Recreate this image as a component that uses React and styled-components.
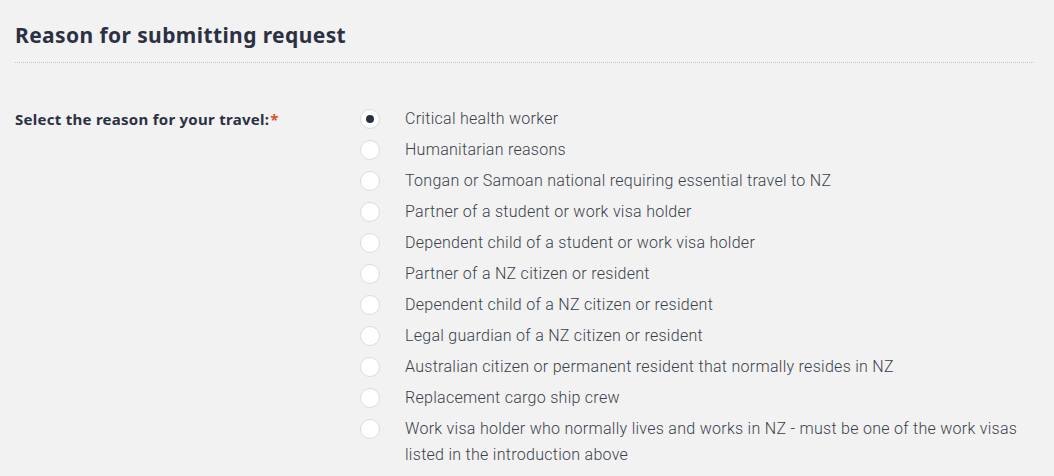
import React from 'react';
import styled, { createGlobalStyle } from 'styled-components';

const GlobalStyle = createGlobalStyle`
  html, body {
    margin: 0;
    background: #f2f2f2;
  }
  body {
    font-family: Roboto, "Noto Sans", sans-serif;
    color: #2b3143;
  }
`;

const Page = styled.section`
  padding: 21px 20px 0 15px;
`;

const Heading = styled.h2`
  margin: 0;
  font-family: "Noto Sans", sans-serif;
  font-size: 21px;
  font-weight: 700;
  line-height: 28px;
  letter-spacing: 0.4px;
  color: #2b3143;
`;

const Divider = styled.hr`
  margin: 13px 0 0;
  border: 0;
  border-top: 1px dotted #c4c4c4;
`;

const Field = styled.div`
  display: grid;
  grid-template-columns: 345px 1fr;
  margin-top: 43px;
`;

const Label = styled.div`
  font-family: "Noto Sans", sans-serif;
  font-size: 15px;
  font-weight: 700;
  line-height: 22px;
  letter-spacing: 0.27px;
  padding-top: 2px;
`;

const Required = styled.span`
  color: #d9532b;
  margin-left: 1px;
`;

const Options = styled.div`
  display: flex;
  flex-direction: column;
`;

const Option = styled.label`
  display: flex;
  align-items: flex-start;
  gap: 25px;
  min-height: 31px;
  font-size: 16px;
  font-weight: 300;
  line-height: 26px;
  letter-spacing: 0.28px;
  color: #3a3f4b;
`;

const Circle = styled.span`
  flex: none;
  width: 20px;
  height: 20px;
  margin-top: 3px;
  border-radius: 50%;
  background: #fff;
  border: 1px solid #dcdcdc;
  box-sizing: border-box;
  display: flex;
  align-items: center;
  justify-content: center;

  &::after {
    content: '';
    width: 8px;
    height: 8px;
    border-radius: 50%;
    background: ${p => (p.$checked ? '#2b3143' : 'transparent')};
  }
`;

const reasons = [
  'Critical health worker',
  'Humanitarian reasons',
  'Tongan or Samoan national requiring essential travel to NZ',
  'Partner of a student or work visa holder',
  'Dependent child of a student or work visa holder',
  'Partner of a NZ citizen or resident',
  'Dependent child of a NZ citizen or resident',
  'Legal guardian of a NZ citizen or resident',
  'Australian citizen or permanent resident that normally resides in NZ',
  'Replacement cargo ship crew',
  'Work visa holder who normally lives and works in NZ - must be one of the work visas listed in the introduction above',
];

const App = () => (
  <>
    <GlobalStyle />
    <Page>
      <Heading>Reason for submitting request</Heading>
      <Divider />
      <Field>
        <Label>
          Select the reason for your travel:<Required>*</Required>
        </Label>
        <Options>
          {reasons.map((reason, index) => (
            <Option key={index}>
              <Circle $checked={index === 0} />
              <span>{reason}</span>
            </Option>
          ))}
        </Options>
      </Field>
    </Page>
  </>
);

export default App;
